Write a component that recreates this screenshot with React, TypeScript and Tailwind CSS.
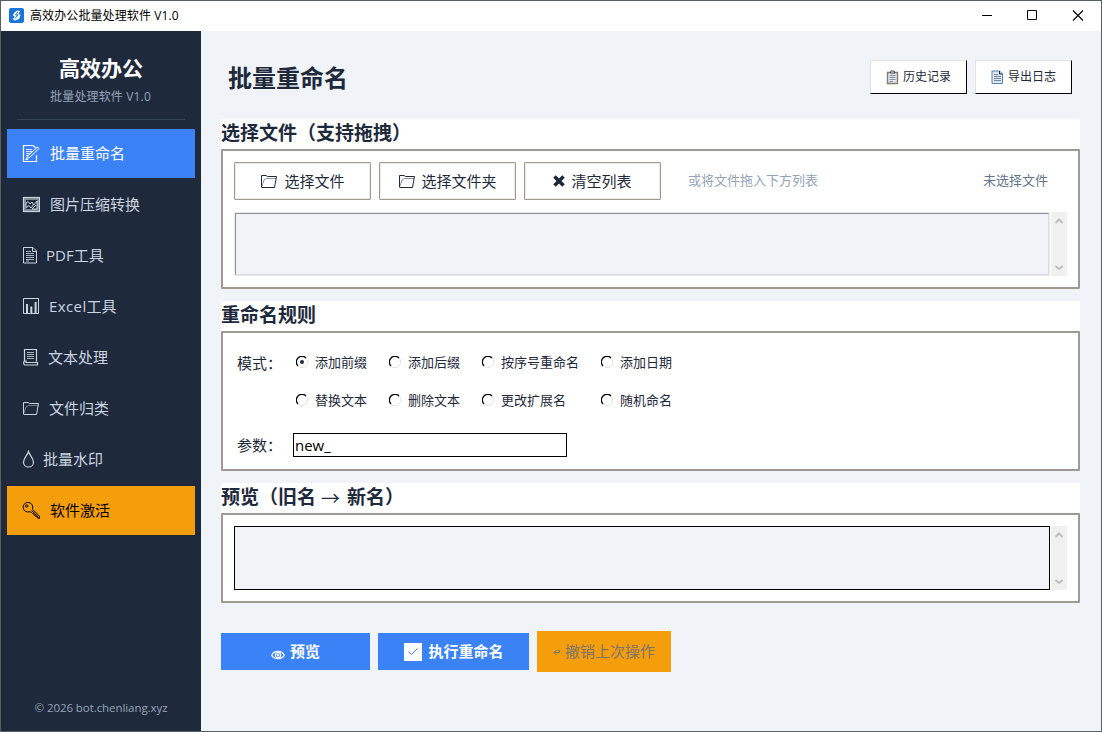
import { useState } from 'react';
import type { ReactNode } from 'react';

const MODES = [
  ['添加前缀', '添加后缀', '按序号重命名', '添加日期'],
  ['替换文本', '删除文本', '更改扩展名', '随机命名'],
];

const FolderIcon = ({ className = '' }: { className?: string }) => (
  <svg width="18" height="18" viewBox="0 0 18 18" fill="none" stroke="currentColor" className={`shrink-0 ${className}`}>
    <path d="M1.5 15V3.5H6L7.5 4.5H16.5L14.5 15.5H1.5" />
    <path d="M2 14L4 8L6.5 6.5H16" opacity="0.5" />
  </svg>
);

const NAV: { label: string; iconWidth: string; icon: ReactNode }[] = [
  {
    label: '批量重命名', iconWidth: 'w-7',
    icon: (
      <>
        <path d="M14.5 11V17.5H1.5V1.5H11L14 4" strokeWidth="1.2" />
        <path d="M4 5.5H10M4 7.5H10M4 9.5H9M4 11.5H7" opacity="0.8" />
        <path d="M4.5 14.5L6 11.5L15.5 3L17 4.5L7.5 13.5L4.5 14.5ZM3.5 15.5H6" />
      </>
    ),
  },
  {
    label: '图片压缩转换', iconWidth: 'w-7',
    icon: (
      <>
        <rect x="1.5" y="2.5" width="16" height="14" strokeWidth="1.2" />
        <rect x="3" y="4" width="13" height="11" opacity="0.55" strokeWidth="2" />
        <path d="M4 12V8L6 6.5L8 9L10 7L11.5 10L15 6V14H10L14 10M4 13L7 10.5L9 13L12 9" />
      </>
    ),
  },
  {
    label: 'PDF工具', iconWidth: 'w-6',
    icon: (
      <>
        <path d="M1.5 1.5H11L14.5 5V17H1.5ZM10.5 1.5V5.5H14.5" />
        <path d="M4 5.5H9M4 7.5H12M4 9.5H12M4 11.5H12M4 13.5H12M4 15H7" opacity="0.8" />
      </>
    ),
  },
  {
    label: 'Excel工具', iconWidth: 'w-[27px]',
    icon: (
      <>
        <path d="M1.5 1.5H16.5V16.5H1.5Z" />
        <path d="M5 16V7M9.3 16V9.5M13.6 16V5" strokeWidth="2" />
      </>
    ),
  },
  {
    label: '文本处理', iconWidth: 'w-[26px]',
    icon: (
      <>
        <path d="M2.5 13V1.5H14.5V13.5" strokeWidth="1.2" />
        <path d="M5 4.5H12M5 6.5H12M5 8.5H12M5 10.5H12" opacity="0.8" />
        <path d="M2.5 13H4V14.5H15.5V17H3.5C1.5 17 1 14.5 2.5 13Z" strokeWidth="1.2" />
      </>
    ),
  },
  { label: '文件归类', iconWidth: 'w-[27px]', icon: null },
  {
    label: '批量水印', iconWidth: 'w-[21px]',
    icon: <path d="M6.5 1.5C5.5 5 1.5 8.5 1.5 12.2C1.5 15 3.6 17 6.5 17C9.4 17 11.5 15 11.5 12.2C11.5 8.5 7.5 5 6.5 1.5Z" strokeWidth="1.2" />,
  },
  {
    label: '软件激活', iconWidth: 'w-7',
    icon: (
      <>
        <path d="M10.3 8.2A4.8 4.8 0 1 0 7.6 10.7L9.3 11.3L10.5 12.5L11.5 12.8L13 15L14.5 15.3L16 17.3H17.6V15.2Z" />
        <circle cx="4.7" cy="5" r="1.2" />
        <path d="M9.5 9.5L16.5 16.3" />
      </>
    ),
  },
];

function ScrollBar() {
  return (
    <div className="ml-px flex h-16 w-4 flex-col items-center justify-between bg-[#f0f0f0] py-1.5 pr-px text-[#bfbfbf]">
      <svg width="8" height="6" viewBox="0 0 8 6" fill="none" stroke="currentColor" strokeWidth="2"><path d="M0.5 5L4 1.5L7.5 5" /></svg>
      <svg width="8" height="6" viewBox="0 0 8 6" fill="none" stroke="currentColor" strokeWidth="2"><path d="M0.5 2L4 5L7.5 2" /></svg>
    </div>
  );
}

function Section({ title, className, children }: { title: ReactNode; className: string; children: ReactNode }) {
  return (
    <section className={`bg-white ${className}`}>
      <h2 className="h-[30px] pt-px text-[19px] leading-[27px] font-bold text-[#1e293b]">{title}</h2>
      <div className="h-[calc(100%-30px)] rounded-[1px] border-2 border-[#9e9a91]">{children}</div>
    </section>
  );
}

function FileButton({ children }: { children: ReactNode }) {
  return (
    <button className="flex h-[38px] w-[137px] items-center justify-center rounded-[1px] border border-[#9e9a91] bg-white text-[15px] shadow-[inset_0_0_0_1px_#eeebe7]">
      {children}
    </button>
  );
}

function HeaderButton({ icon, label }: { icon: ReactNode; label: string }) {
  return (
    <button className="flex h-[34px] w-[97px] items-center border border-t-[#e3e3e3] border-r-black border-b-black border-l-[#e3e3e3] bg-white pl-[15px] text-[12px]">
      <svg width="13" height="15" viewBox="0 0 13 15" fill="none" className="mr-1 shrink-0">{icon}</svg>
      {label}
    </button>
  );
}

function Radio({ label, checked, onChange }: { label: string; checked: boolean; onChange: () => void }) {
  return (
    <label className="flex h-5 items-center gap-[7px] text-[13px]">
      <input type="radio" name="mode" className="sr-only" checked={checked} onChange={onChange} />
      <svg width="12" height="12" viewBox="0 0 12 12" fill="none" className="-mt-0.5 shrink-0">
        <path d="M10 2A5.5 5.5 0 0 1 2 10" stroke="#e3e3e3" />
        <path d="M2 10A5.4 5.4 0 0 1 10 2" stroke="#000" strokeWidth="1.3" />
        {checked && <circle cx="6" cy="6" r="2" fill="#1e293b" />}
      </svg>
      {label}
    </label>
  );
}

export default function App() {
  const [active, setActive] = useState(0);
  const [mode, setMode] = useState('添加前缀');
  const [param, setParam] = useState('new_');

  return (
    <div lang="zh-CN" className="flex h-[732px] w-[1102px] flex-col overflow-hidden border border-[#596166] bg-[#f0f3f8] font-['Open_Sans','Noto_Sans_CJK_SC',sans-serif] text-[#1e293b]">
      <header className="flex h-[30px] shrink-0 items-center bg-white text-[12px] text-black">
        <svg width="15" height="15" viewBox="0 0 15 15" className="-mt-0.5 ml-2">
          <rect width="15" height="15" rx="2" fill="#1976d8" />
          <path d="M5 5L8 2.5L11 3L9.5 6L11.5 7L10 11L6 12.5L3.5 11L6 9L4 7.5Z" fill="#fff" />
          <path d="M9 4L6.5 7H9L6 10.5" stroke="#1976d8" fill="none" />
        </svg>
        <span className="ml-1.5 flex-1 tracking-[0.1px]">高效办公批量处理软件 V1.0</span>
        <svg width="102" height="11" viewBox="0 0 102 11" fill="none" stroke="currentColor" className="-mt-px mr-[17px]">
          <path d="M0 5.5H10" />
          <path d="M45.5 0.5H54.5V9.5H45.5Z" />
          <path d="M91 0.5L101 10.5M101 0.5L91 10.5" strokeWidth="1.1" />
        </svg>
      </header>

      <div className="flex min-h-0 flex-1">
        <aside className="flex w-[200px] shrink-0 flex-col bg-[#1e293b]">
          <h1 className="mt-[21px] text-center text-[21px] leading-8 font-bold text-white">高效办公</h1>
          <p className="mt-1 pr-px text-center text-[12px] leading-[18px] tracking-[0.15px] text-[#94a3b8]">批量处理软件 V1.0</p>
          <div className="mx-4 mt-[13px] h-px bg-[#334155]" />
          <nav className="mx-1.5 mt-[9px] flex flex-col gap-0.5">
            {NAV.map((item, i) => (
              <button
                key={item.label}
                onClick={() => setActive(i)}
                className={`flex h-[49px] items-center pl-[15px] text-left text-[15px] ${i === 7 ? 'bg-[#f59e0b] text-black' : i === active ? 'bg-[#3b82f6] text-white' : 'text-[#cbd5e1]'}`}
              >
                <span className={`shrink-0 ${item.iconWidth}`}>
                  {item.icon ? (
                    <svg width="18" height="18" viewBox="0 0 18 18" fill="none" stroke="currentColor" className="-mt-px">{item.icon}</svg>
                  ) : (
                    <FolderIcon className="-mt-px" />
                  )}
                </span>
                {item.label === 'Excel工具' ? <span><span className="tracking-[0.4px]">Excel</span>工具</span> : item.label}
              </button>
            ))}
          </nav>
          <p className="mt-auto mb-[13px] text-center text-[11.5px] leading-5 tracking-[-0.07px] text-[#94a3b8]">© 2026 bot.chenliang.xyz</p>
        </aside>

        <main className="flex flex-1 flex-col pr-[21px] pl-5">
          <div className="flex h-[88px] shrink-0 items-start pt-[29px] pr-2 pl-[7px]">
            <h1 className="flex-1 text-[24px] leading-9 font-bold">批量重命名</h1>
            <div className="flex gap-2">
              <HeaderButton
                label="历史记录"
                icon={
                  <>
                    <path d="M1.5 2.5H11.5V13.5H1.5Z" fill="#e4e7ec" stroke="#8a7a6c" strokeWidth="1.4" />
                    <path d="M4 3L5 1H8L9 3Z" fill="#fff" stroke="#3c4654" />
                    <path d="M3.5 5.5H9.5M3.5 7.5H9.5M3.5 9.5H9.5M3.5 11.5H7" stroke="#8290a3" />
                  </>
                }
              />
              <HeaderButton
                label="导出日志"
                icon={
                  <>
                    <path d="M1 1H8.5L11.5 4V13.5H1Z" fill="#dce5f1" stroke="#5487b8" />
                    <path d="M8.5 1V4H11.5" stroke="#1e293b" />
                    <path d="M3 4.5H7M3 6.5H10M3 8.5H10M3 10.5H10" stroke="#7b8798" />
                  </>
                }
              />
            </div>
          </div>

          <Section title="选择文件（支持拖拽）" className="h-[170px]">
            <div className="flex items-center gap-2 px-[11px] pt-[11px]">
              <FileButton><FolderIcon className="mr-1.5" />选择文件</FileButton>
              <FileButton><FolderIcon className="mr-[5px]" />选择文件夹</FileButton>
              <FileButton>
                <svg width="12" height="12" viewBox="0 0 12 12" stroke="currentColor" strokeWidth="3.6" className="mr-1.5"><path d="M1.5 1.5L10.5 10.5M10.5 1.5L1.5 10.5" /></svg>
                清空列表
              </FileButton>
              <span className="ml-[19px] flex-1 text-[13px] text-[#94a3b8]">或将文件拖入下方列表</span>
              <span className="mr-[19px] text-[13px] text-[#64748b]">未选择文件</span>
            </div>
            <div className="mt-3 flex pl-[11px]">
              <div className="h-16 w-[816px] border border-[#ebebee]">
                <div className="h-full border border-t-[#8f8f95] border-r-[#d9dbe0] border-b-[#d9dbe0] border-l-[#8f8f95] bg-[#f0f3f8]" />
              </div>
              <ScrollBar />
            </div>
          </Section>

          <Section title="重命名规则" className="mt-3 h-[170px]">
            <div className="flex pt-5 pl-3.5">
              <span className="-mt-px w-[59px] text-[15px] leading-[22px]">模式：</span>
              <div className="grid grid-cols-[93px_93px_119px_90px] gap-y-[18px]">
                {MODES.flat().map(m => (
                  <Radio key={m} label={m} checked={mode === m} onChange={() => setMode(m)} />
                ))}
              </div>
            </div>
            <div className="mt-[22px] flex pl-3.5">
              <span className="w-14 text-[15px] leading-6">参数：</span>
              <input
                value={param}
                onChange={e => setParam(e.target.value)}
                className="h-6 w-[274px] border border-black bg-white pl-px text-[15px] text-black outline-none"
              />
            </div>
          </Section>

          <Section
            title={<span className="flex">预览（旧名<span className="mx-[5px] w-[21px] font-['Noto_Sans_CJK_SC'] font-normal">→</span>新名）</span>}
            className="mt-3 h-[120px]"
          >
            <div className="flex pt-[11px] pl-[11px]">
              <div className="h-16 w-[816px] border border-black bg-[#f0f3f8]" />
              <ScrollBar />
            </div>
          </Section>

          <div className="mt-7 flex items-center gap-2 text-[15px]">
            <button className="flex h-[37px] w-[149px] items-center justify-center bg-[#3b82f6] font-bold text-white">
              <svg width="14" height="10" viewBox="0 0 14 10" fill="none" stroke="currentColor" strokeWidth="1.2" className="mt-1.5 mr-[5px]">
                <path d="M0.7 5.2C3 0 11 0 13.3 5.2C11 9.8 3 9.8 0.7 5.2Z" />
                <circle cx="7" cy="5.2" r="2.6" />
                <circle cx="7" cy="5.2" r="0.7" />
              </svg>
              预览
            </button>
            <button className="flex h-[37px] w-[151px] items-center justify-center bg-[#3b82f6] pl-px font-bold text-white">
              <svg width="18" height="18" viewBox="0 0 18 18" fill="none" className="mr-1.5">
                <rect width="18" height="18" fill="#fff" />
                <path d="M4.5 9L7.5 11.5L13.5 5.5" stroke="#3b82f6" />
              </svg>
              执行重命名
            </button>
            <button disabled className="flex h-[41px] w-[134px] items-center justify-center bg-[#f59e0b] text-[#7c736b]">
              <svg width="8" height="8" viewBox="0 0 8 8" fill="none" stroke="currentColor" className="mr-1">
                <path d="M3.5 2L1 4.5L3.5 7M1 4.5H6.5V2.5H4.5" />
              </svg>
              撤销上次操作
            </button>
          </div>
        </main>
      </div>
    </div>
  );
}
